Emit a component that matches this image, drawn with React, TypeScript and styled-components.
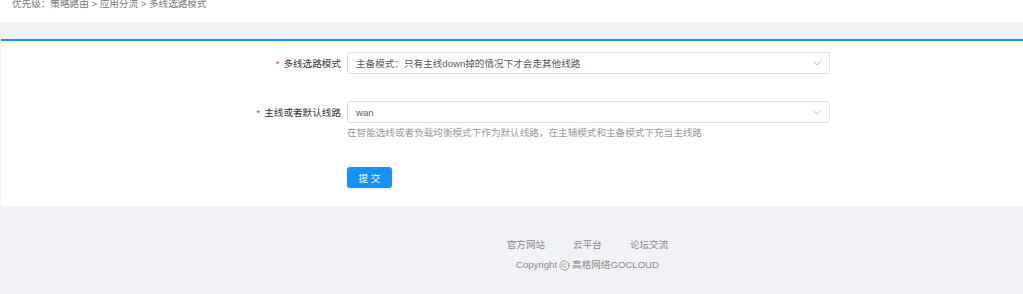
import React from 'react';
import styled, { createGlobalStyle } from 'styled-components';
import { Copyright } from 'lucide-react';

const GlobalStyle = createGlobalStyle`
  html, body {
    margin: 0;
    padding: 0;
    background: #f0f2f5;
    font-family: "Liberation Sans", "Noto Sans CJK SC", sans-serif;
  }
`;

const FONT = '9.6px';

const Page = styled.div`
  width: 1023px;
  min-height: 294px;
  background: #f0f2f5;
  overflow: hidden;
`;

const Header = styled.div`
  height: 22px;
  background: #fff;
  padding-left: 12px;
  overflow: hidden;
`;

const Crumb = styled.div`
  margin-top: -3px;
  font-size: ${FONT};
  line-height: 14px;
  color: #7a7a7a;
`;

const Card = styled.section`
  margin-top: 17px;
  margin-left: 1px;
  background: #fff;
  border-top: 2px solid #1890ff;
  padding: 11px 0 18px;
`;

const Form = styled.div`
  display: grid;
  grid-template-columns: 340px 483px;
  column-gap: 6px;
  align-items: start;
`;

const Label = styled.label`
  height: 22px;
  display: flex;
  align-items: center;
  justify-content: flex-end;
  font-size: ${FONT};
  color: #333;
`;

const Star = styled.span`
  color: #f5222d;
  margin-right: 4px;
  font-family: "Liberation Sans", sans-serif;
`;

const Field = styled.div<{ $gap?: number }>`
  margin-bottom: ${(p) => p.$gap ?? 0}px;
`;

const Select = styled.div`
  height: 22px;
  box-sizing: border-box;
  border: 1px solid #dedede;
  border-radius: 3px;
  display: flex;
  align-items: center;
  justify-content: space-between;
  padding: 0 8px;
  font-size: ${FONT};
  color: #595959;
`;

const Help = styled.div`
  margin-top: 3px;
  font-size: ${FONT};
  line-height: 14px;
  color: #9a9a9a;
`;

const Button = styled.button`
  width: 45px;
  height: 21px;
  border: none;
  border-radius: 3px;
  background: #1890ff;
  color: #fff;
  font-family: inherit;
  font-size: ${FONT};
  padding: 0;
  box-shadow: 0 1px 0 rgba(0, 0, 0, 0.05);
  cursor: pointer;
`;

const Footer = styled.footer`
  padding: 32px 0 0 152px;
  display: flex;
  flex-direction: column;
  align-items: center;
  gap: 6px;
  font-size: ${FONT};
  color: #8c8c8c;
`;

const Links = styled.div`
  display: flex;
  gap: 28px;
  line-height: 14px;
`;

const Copy = styled.div`
  display: flex;
  align-items: center;
  gap: 2px;
  line-height: 14px;
`;

const Chevron = () => (
  <svg width="8" height="5" viewBox="0 0 8 5" fill="none">
    <polyline points="0.5,0.5 4,4 7.5,0.5" stroke="#bfbfbf" strokeWidth="1" />
  </svg>
);

export default function App() {
  return (
    <Page>
      <GlobalStyle />
      <Header>
        <Crumb>优先级：策略路由 &gt; 应用分流 &gt; 多线选路模式</Crumb>
      </Header>
      <Card>
        <Form>
          <Label>
            <Star>*</Star>多线选路模式
          </Label>
          <Field $gap={27}>
            <Select>
              <span>主备模式：只有主线down掉的情况下才会走其他线路</span>
              <Chevron />
            </Select>
          </Field>
          <Label>
            <Star>*</Star>主线或者默认线路
          </Label>
          <Field $gap={27}>
            <Select>
              <span>wan</span>
              <Chevron />
            </Select>
            <Help>在智能选线或者负载均衡模式下作为默认线路，在主辅模式和主备模式下充当主线路</Help>
          </Field>
          <span />
          <Field>
            <Button>提 交</Button>
          </Field>
        </Form>
      </Card>
      <Footer>
        <Links>
          <span>官方网站</span>
          <span>云平台</span>
          <span>论坛交流</span>
        </Links>
        <Copy>
          Copyright <Copyright size={11} strokeWidth={1.8} /> 高格网络GOCLOUD
        </Copy>
      </Footer>
    </Page>
  );
}
